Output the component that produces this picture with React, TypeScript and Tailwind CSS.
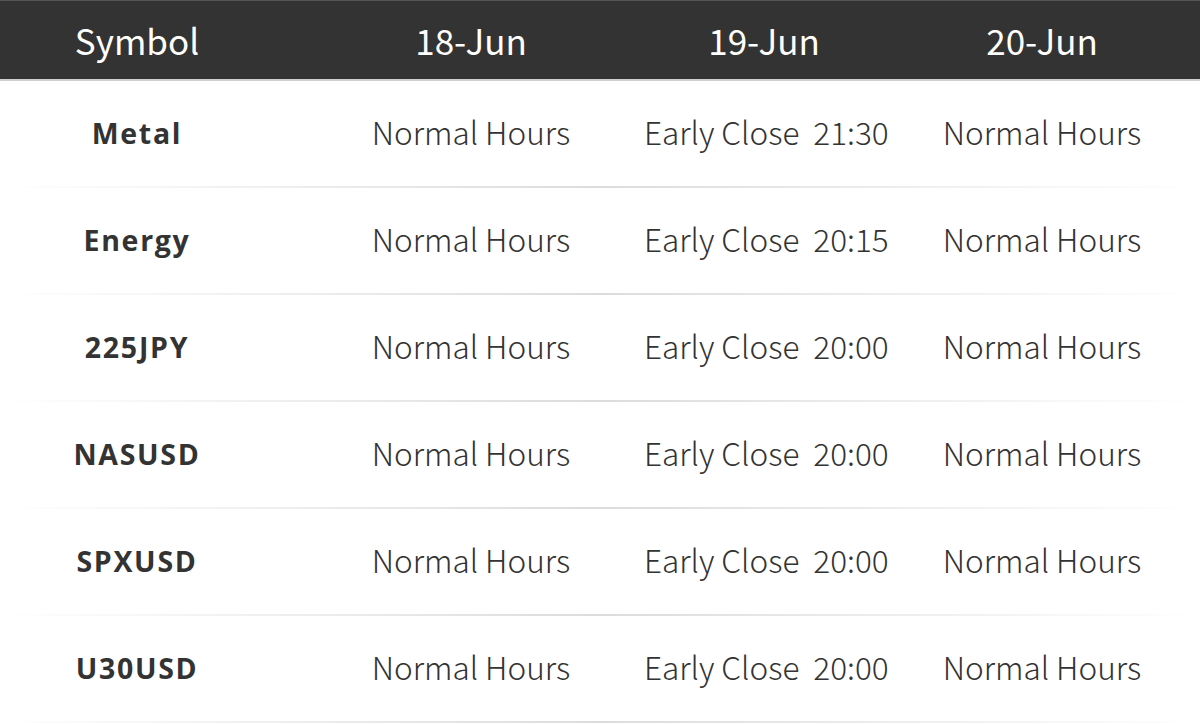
const rows = [
  { symbol: 'Metal', close: '21:30' },
  { symbol: 'Energy', close: '20:15' },
  { symbol: '225JPY', close: '20:00' },
  { symbol: 'NASUSD', close: '20:00' },
  { symbol: 'SPXUSD', close: '20:00' },
  { symbol: 'U30USD', close: '20:00' },
];

const cols = 'grid grid-cols-[274px_370px_240px_316px]';

export default function App() {
  return (
    <div
      className="w-[1200px] h-[724px] bg-white overflow-hidden text-[#333]"
      style={{ fontFamily: '"Noto Sans CJK SC", "Noto Sans", sans-serif' }}
    >
      <div className={`${cols} h-[81px] bg-[#333] border-t border-[#555] border-b-2 border-b-[#cfcfcf] text-white text-[35px] font-normal items-center`}>
        <div className="text-center">Symbol</div>
        <div className="text-center pl-6">18-Jun</div>
        <div className="text-center">19-Jun</div>
        <div className="text-center">20-Jun</div>
      </div>

      {rows.map((row) => (
        <div key={row.symbol}>
          <div className={`${cols} h-[105px] pb-1 items-center text-[31.5px] font-light`}>
            <div
              className="text-center pt-1 text-[28.5px] font-bold tracking-[0.06em] text-[#333]"
              style={{ fontFamily: '"Open Sans", "Noto Sans", sans-serif' }}
            >
              {row.symbol}
            </div>
            <div className="text-center pl-6">Normal Hours</div>
            <div className="text-center whitespace-pre pr-1">Early Close  {row.close}</div>
            <div className="text-center">Normal Hours</div>
          </div>
          <div className="h-[2px] bg-gradient-to-r from-transparent via-[#dcdcdc] to-transparent" />
        </div>
      ))}
    </div>
  );
}
